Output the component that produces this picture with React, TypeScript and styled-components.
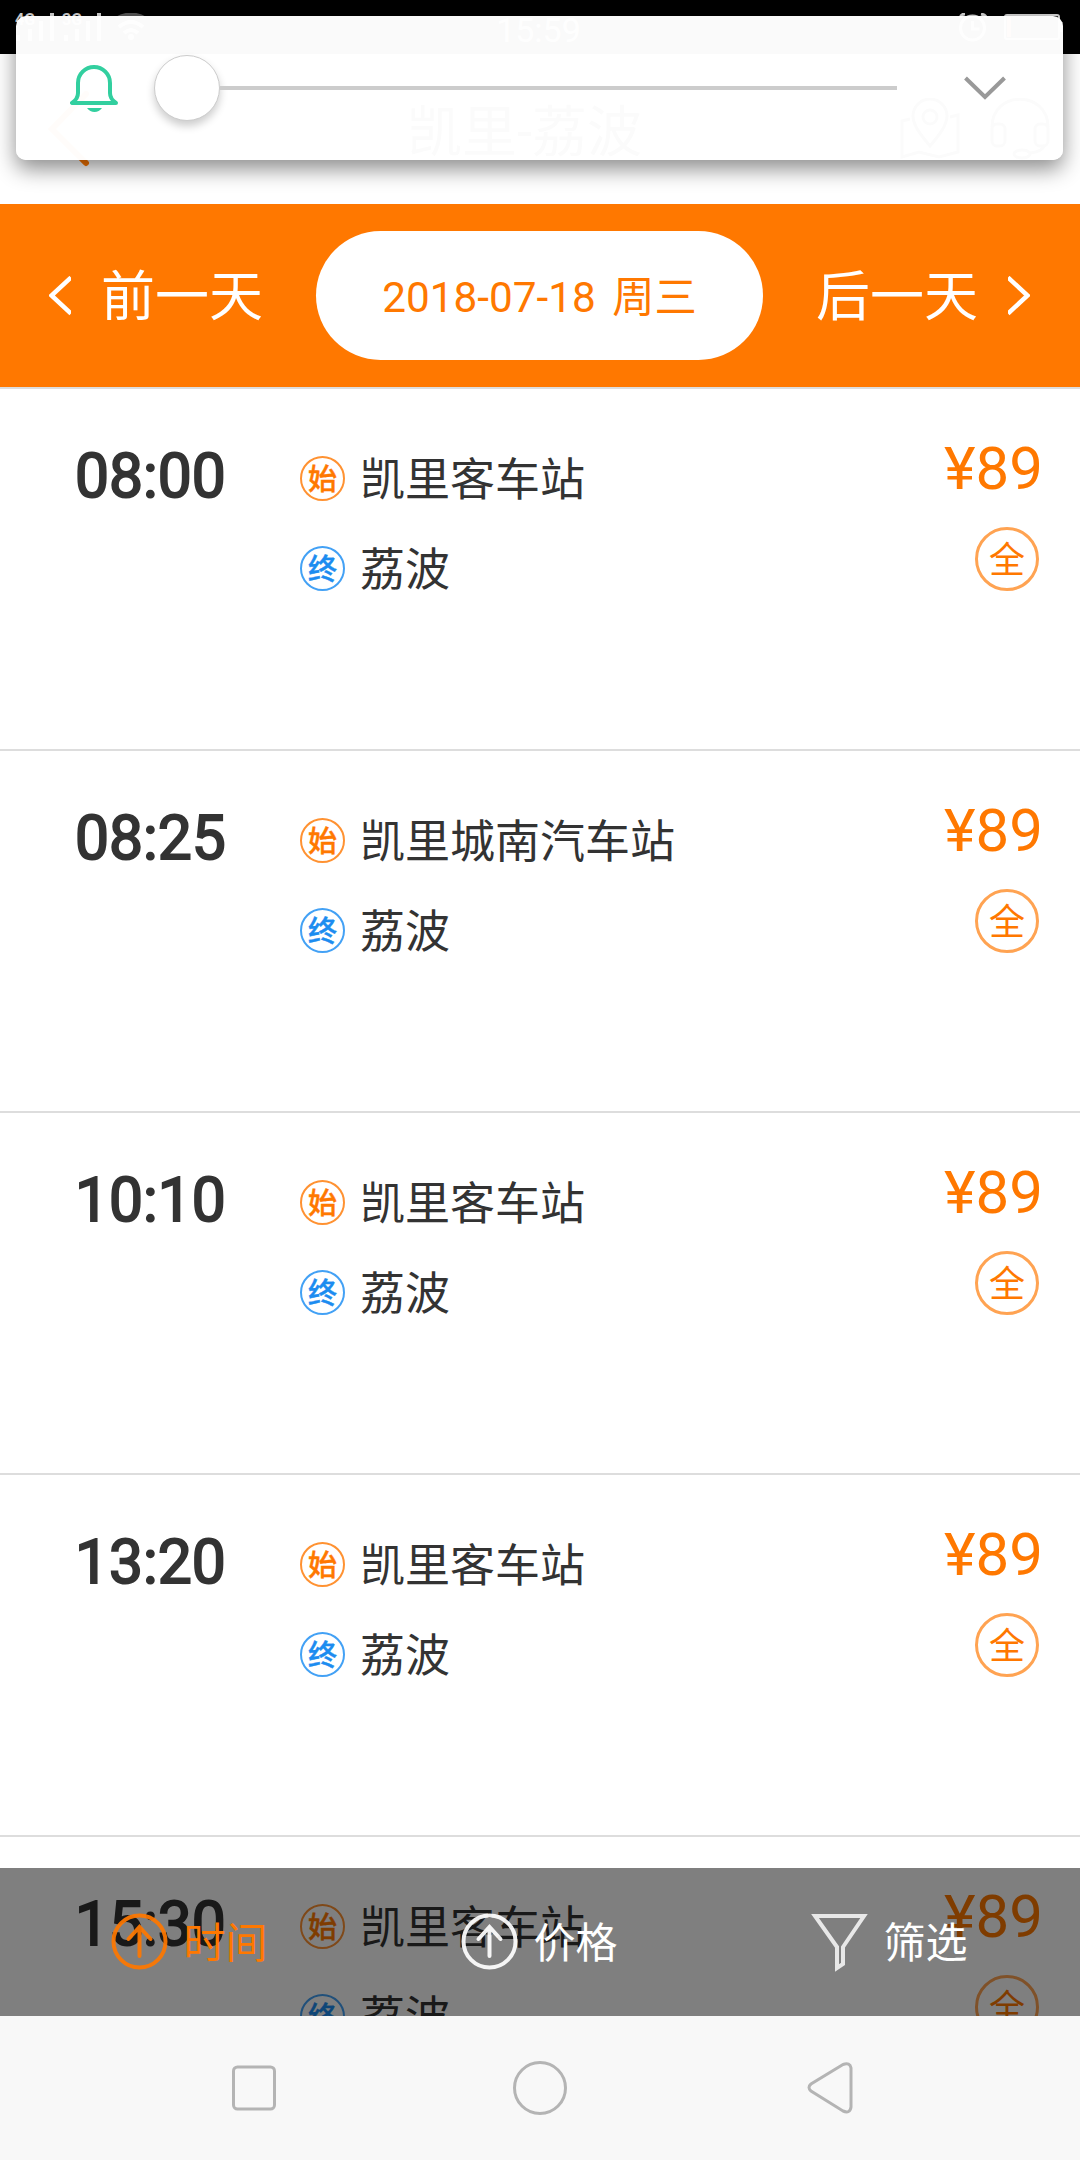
import React from "react";
import styled, { createGlobalStyle } from "styled-components";

const ORANGE = "#ff7800";
const BLUE = "#1c8cf0";

const GlobalStyle = createGlobalStyle`
  * { box-sizing: border-box; }
  body {
    margin: 0;
    background: #fff;
    font-family: Roboto, "Noto Sans CJK SC", sans-serif;
    color: #333;
  }
`;

const Screen = styled.div`
  position: relative;
  display: flex;
  flex-direction: column;
  width: 1080px;
  height: 2160px;
  overflow: hidden;
  background: #fff;
`;

const StatusBar = styled.div`
  display: flex;
  flex: none;
  align-items: flex-start;
  justify-content: space-between;
  height: 54px;
  padding: 13px 14px 0 15px;
  background: #000;
  color: #d2d2d2;
`;

const StatusTime = styled.div`
  margin-right: 32px;
  font-size: 34px;
  line-height: 34px;
`;

const SignalLabel = styled.text`
  font-size: 16px;
  font-weight: 700;
`;

const Header = styled.header`
  display: grid;
  flex: none;
  grid-template-columns: 1fr auto 1fr;
  align-items: center;
  height: 150px;
  padding: 0 30px 0 48px;
`;

const Title = styled.h1`
  margin: 0;
  padding: 5px 49px 0 0;
  font-size: 55px;
  font-weight: 400;
  line-height: 60px;
`;

const HeaderActions = styled.div`
  display: flex;
  justify-content: flex-end;
  gap: 30px;
`;

const DateBar = styled.nav`
  display: flex;
  flex: none;
  align-items: center;
  justify-content: space-between;
  height: 185px;
  padding: 0 50px 0 49px;
  border-bottom: 2px solid #ddd;
  background: ${ORANGE};
`;

const DayButton = styled.button`
  display: flex;
  align-items: center;
  gap: 30px;
  padding: 0;
  border: 0;
  background: none;
  color: #fff;
  font: inherit;
  font-size: 54px;
  line-height: 60px;
`;

const DayLabel = styled.span`
  padding-top: 5px;
`;

const DatePill = styled.div`
  display: flex;
  align-items: center;
  justify-content: center;
  width: 447px;
  height: 129px;
  padding-top: 4px;
  border-radius: 65px;
  background: #fff;
  color: ${ORANGE};
  font-size: 42.300px;
  line-height: 50px;
  white-space: pre;
  word-spacing: 6px;
`;

const TripList = styled.main`
  flex: 1;
  min-height: 0;
  overflow: hidden;
`;

const Trip = styled.article`
  display: grid;
  grid-template-columns: 300px 1fr auto;
  height: 362px;
  border-bottom: 2px solid #ddd;
`;

const Departure = styled.div`
  padding: 53px 0 0 75px;
  font-size: 60.500px;
  line-height: 70px;
  -webkit-text-stroke: 2px currentColor;
`;

const Stations = styled.div`
  display: flex;
  flex-direction: column;
  gap: 30px;
  padding-top: 59px;
`;

const Station = styled.div`
  display: flex;
  align-items: center;
  gap: 15px;
  height: 60px;
`;

const StationName = styled.span`
  padding-top: 5px;
  font-size: 45px;
  line-height: 60px;
`;

const StationMark = styled.span<{ $color: string; $ring: string }>`
  display: flex;
  align-items: center;
  justify-content: center;
  width: 45px;
  height: 45px;
  padding-top: 3px;
  border: 2px solid ${(p) => p.$ring};
  border-radius: 50%;
  color: ${(p) => p.$color};
  font-size: 29px;
  font-weight: 500;
  line-height: 30px;
  -webkit-text-stroke: 0.4px currentColor;
`;

const Fare = styled.div`
  display: flex;
  flex-direction: column;
  align-items: flex-end;
  padding: 45px 37px 0 0;
  color: ${ORANGE};
  font-size: 60px;
  line-height: 70px;
`;

const FareTag = styled.span`
  display: flex;
  align-items: center;
  justify-content: center;
  width: 64px;
  height: 64px;
  margin: 23px 4px 0 0;
  padding-top: 3px;
  border: 3px solid #ffa352;
  border-radius: 50%;
  font-size: 36px;
  line-height: 40px;
`;

const SortBar = styled.div`
  position: absolute;
  left: 0;
  right: 0;
  bottom: 144px;
  display: grid;
  grid-template-columns: repeat(3, 350px);
  justify-content: center;
  height: 148px;
  background: rgba(0, 0, 0, 0.5);
`;

const SortItem = styled.div<{ $active?: boolean }>`
  display: flex;
  align-items: center;
  justify-content: center;
  gap: 15px;
  padding-right: 1px;
  color: ${(p) => (p.$active ? ORANGE : "#fff")};
`;

const SortLabel = styled.span`
  padding-top: 3px;
  font-size: 42px;
  line-height: 50px;
`;

const SystemNav = styled.footer`
  display: grid;
  flex: none;
  grid-template-columns: 284px 288px 292px;
  align-items: center;
  justify-content: center;
  justify-items: center;
  height: 144px;
  padding-left: 8px;
  background: #f8f8f8;
`;

const VolumePanel = styled.div`
  position: absolute;
  top: 16px;
  left: 16px;
  display: flex;
  align-items: flex-start;
  width: 1047px;
  height: 144px;
  padding: 39px 57px 0 54px;
  border-radius: 10px;
  background: rgba(255, 255, 255, 0.98);
  box-shadow: 0 9px 21px rgba(0, 0, 0, 0.45);
`;

const BellSlot = styled.div`
  display: flex;
  width: 84px;
  padding-top: 10px;
`;

const Slider = styled.div`
  display: flex;
  align-items: center;
  width: 743px;
  height: 66px;
`;

const Knob = styled.span`
  width: 66px;
  height: 66px;
  border: 1px solid #ccc;
  border-radius: 50%;
  background: #fff;
  box-shadow: 0 5px 8px rgba(0, 0, 0, 0.2);
`;

const Track = styled.span`
  flex: 1;
  height: 4px;
  background: #ccc;
`;

const ExpandSlot = styled.div`
  display: flex;
  margin-left: auto;
  padding-top: 21px;
`;

const SignalIcon = () => (
  <svg width="136" height="30" viewBox="0 0 136 30" fill="currentColor">
    <SignalLabel x="0" y="12">4G</SignalLabel>
    <rect x="1" y="22" width="4" height="6" />
    <rect x="13" y="16" width="4" height="12" />
    <rect x="24" y="8" width="4" height="20" />
    <rect x="35" y="0" width="4" height="28" />
    <SignalLabel x="47" y="12">3G</SignalLabel>
    <rect x="49" y="22" width="4" height="6" />
    <rect x="60" y="16" width="4" height="12" />
    <rect x="71" y="8" width="4" height="20" />
    <rect x="82" y="0" width="4" height="28" />
    <g fill="none" stroke="currentColor" strokeWidth="4">
      <path d="M101 6q15-9 30 0" opacity=".4" />
      <path d="M104 14q12-10 24 0M109 20q7-6 14 0" />
    </g>
    <circle cx="116" cy="24" r="3" />
  </svg>
);

const PowerIcon = () => (
  <svg width="108" height="30" viewBox="0 0 108 30" fill="none" stroke="currentColor">
    <circle cx="14.500" cy="15" r="12" strokeWidth="3" />
    <path d="M14.500 8v8h7M2 5q1-4 5-4M23 1q5 1 5 4" strokeWidth="3" />
    <rect x="47" y="2" width="54" height="24" rx="2" strokeWidth="2" />
    <path d="M49 4h4v20h-4z" fill="#f06030" stroke="none" />
    <path d="M103 9v10" strokeWidth="3" />
  </svg>
);

const BackIcon = () => (
  <svg width="44" height="76" viewBox="0 0 44 76" fill="none" stroke={ORANGE} strokeWidth="6" strokeLinecap="round">
    <path d="M38 3 4 38 38 72" />
  </svg>
);

const MapIcon = () => (
  <svg width="60" height="62" viewBox="0 0 60 62" fill="none" stroke="#333" strokeWidth="3">
    <path d="M10 21 2 23v36l17-5 20 5 19-5V17l-8 2" />
    <path d="M30 48C20 36 13 27 13 18a17 17 0 0 1 34 0c0 9-7 18-17 30z" />
    <circle cx="30" cy="19" r="7" />
  </svg>
);

const HeadsetIcon = () => (
  <svg width="60" height="62" viewBox="0 0 60 62" fill="none" stroke="#333" strokeWidth="3">
    <path d="M2 29C2-8 58-8 58 29" />
    <rect x="2" y="26" width="13" height="22" rx="5" />
    <rect x="45" y="26" width="13" height="22" rx="5" />
    <path d="M55 47q-3 7-15 8" />
    <ellipse cx="32" cy="56" rx="8" ry="4" />
  </svg>
);

const DayChevron = ({ next }: { next?: boolean }) => (
  <svg width="22" height="40" viewBox="0 0 22 40" fill="none" stroke="#fff" strokeWidth="4.500">
    <path d={next ? "M0 1.500 19.500 19.500 0 37.500" : "M22 1.500 2.500 19.500 22 37.500"} />
  </svg>
);

const BellIcon = () => (
  <svg width="48" height="48" viewBox="0 0 48 48" fill="none" stroke="#32cf9f" strokeWidth="4" strokeLinecap="round" strokeLinejoin="round">
    <path d="M2 38H46Q40 34 40 28V18a16 16 0 0 0-32 0v10Q8 34 2 38z" />
    <path d="M17 43h15q-3 4-7.500 4T17 43z" fill="#32cf9f" stroke="none" />
  </svg>
);

const ExpandIcon = () => (
  <svg width="42" height="24" viewBox="0 0 42 24" fill="none" stroke="#999" strokeWidth="4">
    <path d="M1.500 2 21 21 40.500 2" />
  </svg>
);

const SortIcon = () => (
  <svg width="57" height="58" viewBox="0 0 57 58" fill="none" stroke="currentColor" strokeWidth="4" strokeLinecap="round" opacity="0.92">
    <circle cx="28.500" cy="28.500" r="26" />
    <path d="M28.500 43V15M17.500 26 28.500 14 39.500 26" />
  </svg>
);

const FilterIcon = () => (
  <svg width="57" height="60" viewBox="0 0 57 60" fill="none" stroke="#e8e8e8" strokeWidth="4">
    <path d="M4 4H53L32 35V52L26 56V35Z" />
  </svg>
);

const trips = [
  { time: "08:00", from: "凯里客车站", to: "荔波", fare: 89 },
  { time: "08:25", from: "凯里城南汽车站", to: "荔波", fare: 89 },
  { time: "10:10", from: "凯里客车站", to: "荔波", fare: 89 },
  { time: "13:20", from: "凯里客车站", to: "荔波", fare: 89 },
  { time: "15:30", from: "凯里客车站", to: "荔波", fare: 89 },
];

export default function App() {
  return (
    <>
      <GlobalStyle />
      <Screen>
        <StatusBar>
          <SignalIcon />
          <StatusTime>15:59</StatusTime>
          <PowerIcon />
        </StatusBar>
        <Header>
          <BackIcon />
          <Title>凯里-荔波</Title>
          <HeaderActions>
            <MapIcon />
            <HeadsetIcon />
          </HeaderActions>
        </Header>
        <DateBar>
          <DayButton>
            <DayChevron />
            <DayLabel>前一天</DayLabel>
          </DayButton>
          <DatePill>2018-07-18 周三</DatePill>
          <DayButton>
            <DayLabel>后一天</DayLabel>
            <DayChevron next />
          </DayButton>
        </DateBar>
        <TripList>
          {trips.map((trip) => (
            <Trip key={trip.time}>
              <Departure>{trip.time}</Departure>
              <Stations>
                <Station>
                  <StationMark $color={ORANGE} $ring="#ff9232">始</StationMark>
                  <StationName>{trip.from}</StationName>
                </Station>
                <Station>
                  <StationMark $color={BLUE} $ring="#43a1f5">终</StationMark>
                  <StationName>{trip.to}</StationName>
                </Station>
              </Stations>
              <Fare>
                ¥{trip.fare}
                <FareTag>全</FareTag>
              </Fare>
            </Trip>
          ))}
        </TripList>
        <SystemNav>
          <svg width="44" height="46" viewBox="0 0 44 46" fill="none" stroke="#b4b4b4" strokeWidth="3">
            <rect x="1.500" y="2" width="41" height="42" rx="4" />
          </svg>
          <svg width="56" height="56" viewBox="0 0 56 56" fill="none" stroke="#b4b4b4" strokeWidth="3">
            <circle cx="28" cy="28" r="25.500" />
          </svg>
          <svg width="48" height="54" viewBox="0 0 48 54" fill="none" stroke="#b4b4b4" strokeWidth="3">
            <path d="M37 3.500 5 23q-4 3.500 0 7L37 50q7 3 8-4V7q-1-6-8-3.500z" />
          </svg>
        </SystemNav>
        <SortBar>
          <SortItem $active>
            <SortIcon />
            <SortLabel>时间</SortLabel>
          </SortItem>
          <SortItem>
            <SortIcon />
            <SortLabel>价格</SortLabel>
          </SortItem>
          <SortItem>
            <FilterIcon />
            <SortLabel>筛选</SortLabel>
          </SortItem>
        </SortBar>
        <VolumePanel>
          <BellSlot>
            <BellIcon />
          </BellSlot>
          <Slider>
            <Knob />
            <Track />
          </Slider>
          <ExpandSlot>
            <ExpandIcon />
          </ExpandSlot>
        </VolumePanel>
      </Screen>
    </>
  );
}
